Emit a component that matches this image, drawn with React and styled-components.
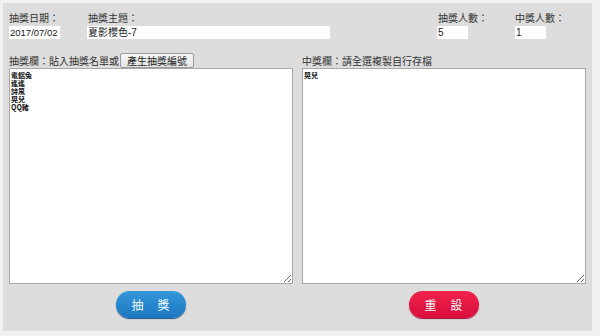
import React from "react";
import styled, { createGlobalStyle } from "styled-components";

const Global = createGlobalStyle`
  html, body { margin: 0; padding: 0; background: #f1f1f1; }
  body { font-family: "Noto Sans CJK TC", "Liberation Sans", sans-serif; color: #333; }
  * { box-sizing: border-box; }
`;

const Panel = styled.div`
  margin: 3px 8px 0 3px;
  width: 589px;
  height: 328px;
  background: #dddddd;
  padding: 8px 6px 0 6px;
  display: flex;
  flex-direction: column;
`;

const TopRow = styled.div`
  display: flex;
  align-items: flex-start;
`;

const Field = styled.div`
  display: flex;
  flex-direction: column;
  width: ${(p) => p.$w}px;
  margin-left: ${(p) => p.$ml || 0}px;
`;

const Label = styled.div`
  font-size: 10px;
  line-height: 14px;
  height: 14px;
  color: #333;
  white-space: nowrap;
  padding-left: ${(p) => p.$pl || 0}px;
`;

const Value = styled.input`
  margin-top: 1px;
  height: 13px;
  width: ${(p) => p.$w}px;
  border: none;
  outline: none;
  background: #ffffff;
  font-family: "Liberation Sans", "Noto Sans CJK TC", sans-serif;
  font-size: ${(p) => p.$fs || 10}px;
  line-height: 13px;
  padding: 0 0 0 1px;
  color: #222;
`;

const Columns = styled.div`
  margin-top: 14px;
  display: grid;
  grid-template-columns: 284px 284px;
  column-gap: 9px;
`;

const Column = styled.div`
  display: flex;
  flex-direction: column;
  align-items: center;
`;

const Header = styled.div`
  align-self: stretch;
  height: 15px;
  display: flex;
  align-items: center;
  font-size: 10px;
  color: #333;
  white-space: nowrap;
`;

const SmallButton = styled.button`
  margin-left: 1px;
  height: 15px;
  padding: 0 6px;
  font-family: "Noto Sans CJK TC", sans-serif;
  font-size: 10px;
  line-height: 13px;
  color: #222;
  background: linear-gradient(#f6f6f6, #e4e4e4);
  border: 1px solid #9a9a9a;
  border-radius: 2px;
`;

const Area = styled.textarea`
  align-self: stretch;
  height: 216px;
  margin: 0;
  border: 1px solid #a8a8a8;
  background: #fff;
  padding: 2px 1px;
  font-family: "Noto Sans CJK TC", sans-serif;
  font-size: 7px;
  line-height: 8px;
  font-weight: 700;
  color: #111;
  resize: both;
  outline: none;
`;

const Pill = styled.button`
  margin-top: 7px;
  width: 70px;
  height: 27px;
  border-radius: 14px;
  border: none;
  color: #f4fbff;
  font-family: "Noto Sans CJK TC", sans-serif;
  font-size: 12px;
  letter-spacing: 1px;
  background: ${(p) =>
    p.$red
      ? "linear-gradient(#f0234b, #d90d3c)"
      : "linear-gradient(#3498db, #1d76bf)"};
  box-shadow: 0 1px 1px ${(p) => (p.$red ? "#9a1030" : "#1a5384")};
  cursor: pointer;
`;

export default function App() {
  return (
    <>
      <Global />
      <Panel>
        <TopRow>
          <Field $w={78}>
            <Label>抽獎日期：</Label>
            <Value $w={51} $fs={9.5} defaultValue="2017/07/02" />
          </Field>
          <Field $w={243}>
            <Label $pl={1}>抽獎主題：</Label>
            <Value $w={243} defaultValue="夏影櫻色-7" />
          </Field>
          <Field $w={31} $ml={107}>
            <Label $pl={1}>抽獎人數：</Label>
            <Value $w={31} defaultValue="5" />
          </Field>
          <Field $w={31} $ml={47}>
            <Label>中獎人數：</Label>
            <Value $w={31} defaultValue="1" />
          </Field>
        </TopRow>
        <Columns>
          <Column>
            <Header>
              抽獎欄：貼入抽獎名單或
              <SmallButton>產生抽獎編號</SmallButton>
            </Header>
            <Area defaultValue={"電鋁兔\n遙遙\n詩風\n晃兒\nQQ豬"} />
            <Pill>抽　獎</Pill>
          </Column>
          <Column>
            <Header>中獎欄：請全選複製自行存檔</Header>
            <Area defaultValue={"晃兒"} />
            <Pill $red>重　設</Pill>
          </Column>
        </Columns>
      </Panel>
    </>
  );
}
